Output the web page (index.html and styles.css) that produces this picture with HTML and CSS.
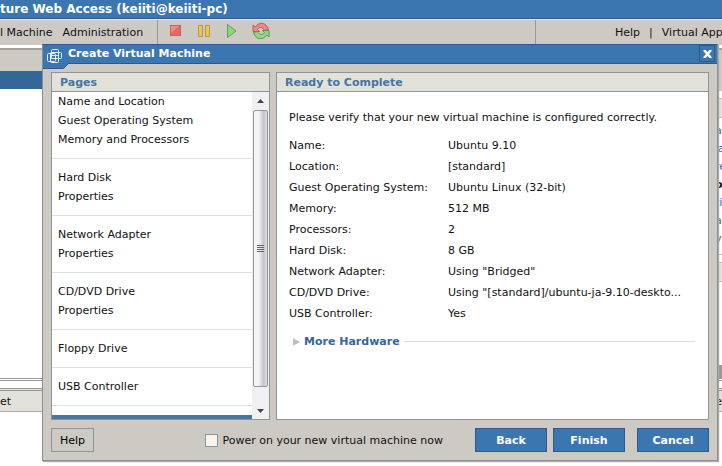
FILE: index.html
```html
<!DOCTYPE html>
<html lang="en">
<head>
    <meta charset="UTF-8">
    <title>Create Virtual Machine</title>
    <link rel="stylesheet" href="styles.css">
</head>
<body>
<header class="banner">ture Web Access (keiiti@keiiti-pc)</header>
<nav class="toolbar">
    <div class="menus">
        <a href="#">l Machine</a>
        <a href="#">Administration</a>
    </div>
    <div class="tools">
        <button type="button" aria-label="Stop">
            <svg width="16" height="16" viewBox="0 0 16 16"><rect x="2.500" y="2.500" width="10" height="10" fill="#e56864" stroke="#c9615c"/><path d="M3 10V3h8z" fill="#f08c86"/></svg>
        </button>
        <button type="button" aria-label="Pause">
            <svg width="16" height="16" viewBox="0 0 16 16"><path d="M2.500 2.500h4v11h-4zM9.500 2.500h4v11h-4z" fill="#eec45a" stroke="#b9964a"/></svg>
        </button>
        <button type="button" aria-label="Play">
            <svg width="16" height="16" viewBox="0 0 16 16"><path d="M3.500 1.500v13l8.500-6.500z" fill="#8fd47e" stroke="#5aa552"/></svg>
        </button>
        <button type="button" aria-label="Restart">
            <svg width="18" height="18" viewBox="0 0 18 18"><path d="M1 3v6.500h6.500L5.500 7.300C8 4.500 10.500 5 12.500 8.500l4-1C14.500.5 7.500-.8 3.300 5z" fill="#ec8b84" stroke="#b95a55"/><path d="M17 15V8.500h-6.500l2 2.200C10 13.500 7.500 13 5.500 9.500l-4 1C3.500 17.500 10.500 18.800 14.700 13z" fill="#93d684" stroke="#549b50"/></svg>
        </button>
    </div>
    <div class="links">
        <a href="#">Help</a>
        <span>|</span>
        <a href="#">Virtual App</a>
    </div>
</nav>

<main class="workspace">
    <aside class="inventory">
        <div class="pane-head"></div>
        <div class="current"></div>
    </aside>
    <aside class="commands">
        <div class="pane-head"></div>
        <div class="box-head"></div>
        <ul>
            <li><a href="#">al</a></li>
            <li><a href="#">la</a></li>
            <li><a href="#">re</a></li>
            <li><b>o</b></li>
            <li><a href="#">ti</a></li>
            <li><a href="#">a</a></li>
            <li><a href="#">vo</a></li>
        </ul>
        <div class="box-head"></div>
        <div class="scroll-end"></div>
    </aside>
</main>
<footer class="tasks">
    <div class="task-head"><span>et</span><span>e</span></div>
</footer>

<section class="dialog" role="dialog" aria-labelledby="dialog-title">
    <div class="dialog-title">
        <svg class="tab" width="25" height="24" viewBox="0 0 25 24">
            <path d="M0 0h25v19l-4 4H0z" fill="#3c76b1"/>
            <path d="M25.500 18.500l-5 5H0" fill="none" stroke="#2b5a8c"/>
            <g fill="none" stroke="#e6eef6"><rect x="4.500" y="8.500" width="8" height="8" rx="1"/><rect x="8.500" y="4.500" width="7" height="9" rx="1"/><rect x="7.500" y="7.500" width="11" height="6" rx="1"/><rect x="7.500" y="10.500" width="8" height="7" rx="1"/></g>
        </svg>
        <h1 id="dialog-title">Create Virtual Machine</h1>
        <button type="button" class="close" aria-label="Close">
            <svg width="9" height="8" viewBox="0 0 9 8"><path d="M1 0l7 8M8 0L1 8" stroke="#fff" stroke-width="2.500"/></svg>
        </button>
    </div>
    <div class="panels">
        <div class="panel pages">
            <h2>Pages</h2>
            <div class="page-scroller">
                <div class="page-list">
                    <ul>
                        <li>Name and Location</li>
                        <li>Guest Operating System</li>
                        <li>Memory and Processors</li>
                    </ul>
                    <ul>
                        <li>Hard Disk</li>
                        <li>Properties</li>
                    </ul>
                    <ul>
                        <li>Network Adapter</li>
                        <li>Properties</li>
                    </ul>
                    <ul>
                        <li>CD/DVD Drive</li>
                        <li>Properties</li>
                    </ul>
                    <ul>
                        <li>Floppy Drive</li>
                    </ul>
                    <ul>
                        <li>USB Controller</li>
                    </ul>
                    <ul>
                        <li class="selected"></li>
                    </ul>
                </div>
                <div class="scrollbar">
                    <svg class="arrow" width="7" height="4" viewBox="0 0 7 4"><path d="M0 4l3.500-4L7 4z" fill="#444"/></svg>
                    <div class="thumb"><i></i><i></i><i></i><i></i></div>
                    <svg class="arrow" width="7" height="4" viewBox="0 0 7 4"><path d="M0 0l3.500 4L7 0z" fill="#444"/></svg>
                </div>
            </div>
        </div>
        <div class="panel summary">
            <h2>Ready to Complete</h2>
            <div class="summary-body">
                <p>Please verify that your new virtual machine is configured correctly.</p>
                <table>
                    <tr><th scope="row">Name:</th><td>Ubuntu 9.10</td></tr>
                    <tr><th scope="row">Location:</th><td>[standard]</td></tr>
                    <tr><th scope="row">Guest Operating System:</th><td>Ubuntu Linux (32-bit)</td></tr>
                    <tr><th scope="row">Memory:</th><td>512 MB</td></tr>
                    <tr><th scope="row">Processors:</th><td>2</td></tr>
                    <tr><th scope="row">Hard Disk:</th><td>8 GB</td></tr>
                    <tr><th scope="row">Network Adapter:</th><td>Using "Bridged"</td></tr>
                    <tr><th scope="row">CD/DVD Drive:</th><td>Using "[standard]/ubuntu-ja-9.10-deskto...</td></tr>
                    <tr><th scope="row">USB Controller:</th><td>Yes</td></tr>
                </table>
                <div class="more">
                    <svg width="7" height="8" viewBox="0 0 7 8"><path d="M0 0l7 4-7 4z" fill="#bfbfbf"/></svg>
                    <a href="#">More Hardware</a>
                </div>
            </div>
        </div>
    </div>
    <div class="actions">
        <button type="button" class="help">Help</button>
        <label><input type="checkbox">Power on your new virtual machine now</label>
        <button type="button" class="primary">Back</button>
        <button type="button" class="primary">Finish</button>
        <button type="button" class="primary cancel">Cancel</button>
    </div>
</section>
</body>
</html>
```
FILE: styles.css
```css
* {
    margin: 0;
    padding: 0;
    box-sizing: border-box;
}
body {
    position: relative;
    display: flex;
    flex-direction: column;
    min-height: 100vh;
    overflow: hidden;
    background: #fff;
    color: #111;
    font: 11px/19px Verdana, "DejaVu Sans", sans-serif;
}
a {
    color: inherit;
    text-decoration: none;
}
ul {
    list-style: none;
}
button,
input {
    font: inherit;
}
.banner {
    height: 19px;
    background: #3c76b1;
    border-bottom: 1px solid #2b5a8c;
    color: #fff;
    font-size: 12px;
    font-weight: bold;
    white-space: nowrap;
}

/* toolbar */
.toolbar {
    display: flex;
    height: 26px;
    background: #cccac3;
    border-top: 1px solid #e8e7e2;
    line-height: 25px;
    white-space: nowrap;
}
.menus {
    display: flex;
    gap: 10px;
    width: 158px;
    border-right: 1px solid #999;
}
.tools {
    display: flex;
    flex: 1;
    align-items: center;
    gap: 12px;
    padding: 0 0 3px 10px;
}
.tools button {
    display: flex;
    border: 0;
    background: none;
}
.links {
    display: flex;
    gap: 9px;
    width: 187px;
    padding-left: 79px;
    border-left: 1px solid #999;
    overflow: hidden;
}

/* page behind the dialog */
.workspace {
    display: flex;
    flex: 1;
    justify-content: space-between;
    padding-top: 3px;
}
.inventory {
    width: 50px;
}
.pane-head {
    height: 23px;
    background: #cccac3;
    border-top: 2px solid #a3a29e;
}
.current {
    height: 18px;
    background: #336699;
}
.commands {
    display: flex;
    flex-direction: column;
    width: 7px;
    overflow: hidden;
}
.commands .pane-head {
    height: 43px;
}
.box-head {
    height: 20px;
    margin-top: 7px;
    background: #e3e2da;
    border: solid #bbb;
    border-width: 1px 0;
}
.commands ul {
    padding: 4px 0 6px;
    border-bottom: 1px solid #bbb;
    line-height: 18px;
}
.commands a {
    color: #2f68b5;
}
.scroll-end {
    height: 13px;
    margin-top: auto;
    background: #999;
}
.tasks {
    height: 88px;
    padding-top: 7px;
    border-top: 3px double #999;
}
.task-head {
    display: flex;
    justify-content: space-between;
    height: 24px;
    padding-top: 1px;
    background: #e3e2da;
    border-top: 3px double #999;
    border-bottom: 1px solid #aaa;
}

/* dialog */
.dialog {
    position: absolute;
    top: 44px;
    right: 4px;
    bottom: 5px;
    left: 42px;
    display: flex;
    flex-direction: column;
    background: #cccac3;
    border: 1px solid #8b8f92;
    border-top-color: #2b5a8c;
    box-shadow: 1px 1px 1px #aaa;
}
.dialog-title {
    position: relative;
    display: flex;
    justify-content: space-between;
    height: 19px;
    padding: 0 2px 0 25px;
    background: #3c76b1;
    border-bottom: 1px solid #2b5a8c;
    color: #fff;
}
.dialog-title h1 {
    font-size: 11px;
    line-height: 17px;
}
.tab {
    position: absolute;
    top: 0;
    left: 0;
}
.close {
    display: flex;
    align-items: center;
    justify-content: center;
    width: 16px;
    height: 17px;
    border: 1px solid #2b5a8c;
    background: none;
}
.panels {
    display: flex;
    flex: 1;
    gap: 6px;
    min-height: 0;
    padding: 8px 8px 0;
}
.panel {
    display: flex;
    flex-direction: column;
    background: #fff;
    border: 1px solid #8f9496;
}
.panel h2 {
    height: 19px;
    padding: 0 8px;
    background: #e3e2da;
    border-bottom: 1px solid #8f9496;
    color: #4475a4;
    font-size: 11px;
    line-height: 20px;
}
.pages {
    width: 219px;
}
.page-scroller {
    display: flex;
    flex: 1;
    min-height: 0;
}
.page-list {
    flex: 1;
    overflow: hidden;
}
.page-list ul {
    padding: 9px 0;
    border-bottom: 1px solid #dbe0e0;
}
.page-list ul:first-child {
    padding-top: 0;
}
.page-list li {
    height: 19px;
    padding-left: 6px;
}
.page-list .selected {
    background: #4475a4;
}
.scrollbar {
    display: flex;
    flex-direction: column;
    align-items: center;
    justify-content: space-between;
    width: 17px;
    padding: 7px 1px 6px 0;
    background: #f0f0f0;
}
.thumb {
    display: flex;
    flex: 1;
    flex-direction: column;
    justify-content: center;
    gap: 1px;
    width: 15px;
    margin: 7px 0 22px;
    padding: 0 3px;
    border: 1px solid #979797;
    border-radius: 2px;
    background: linear-gradient(to right, #f4f4f4 35%, #c4c4ca 75%, #dcdce0);
}
.thumb i {
    height: 1px;
    background: #666;
}
.summary {
    flex: 1;
}
.summary-body {
    padding: 16px 13px 0 12px;
}
.summary-body table {
    width: 100%;
    margin-top: 8px;
    border-collapse: collapse;
    line-height: 21px;
    white-space: nowrap;
}
.summary-body th {
    width: 159px;
    font-weight: normal;
    text-align: left;
}
.more {
    display: flex;
    align-items: center;
    gap: 4px;
    margin-top: 8px;
    padding-left: 4px;
    color: #3a6596;
    font-weight: bold;
}
.more::after {
    content: "";
    flex: 1;
    height: 1px;
    background: #d8dcdc;
}
.actions {
    display: flex;
    align-items: center;
    padding: 8px;
}
.actions button {
    height: 24px;
    border: 1px solid #8f9496;
    background: #cccac3;
}
.actions .help {
    width: 43px;
    margin-right: auto;
}
.actions label {
    display: flex;
    align-items: center;
    gap: 4px;
    margin-right: 32px;
}
.actions input {
    width: 13px;
    height: 13px;
    appearance: none;
    border: 1px solid #8f9496;
    background: #f6f4ec;
}
.actions .primary {
    width: 72px;
    margin-right: 6px;
    border-color: #2b5a8c;
    background: #3c76b1;
    color: #fff;
    font-weight: bold;
}
.actions .cancel {
    margin: 0 0 0 6px;
}
```
